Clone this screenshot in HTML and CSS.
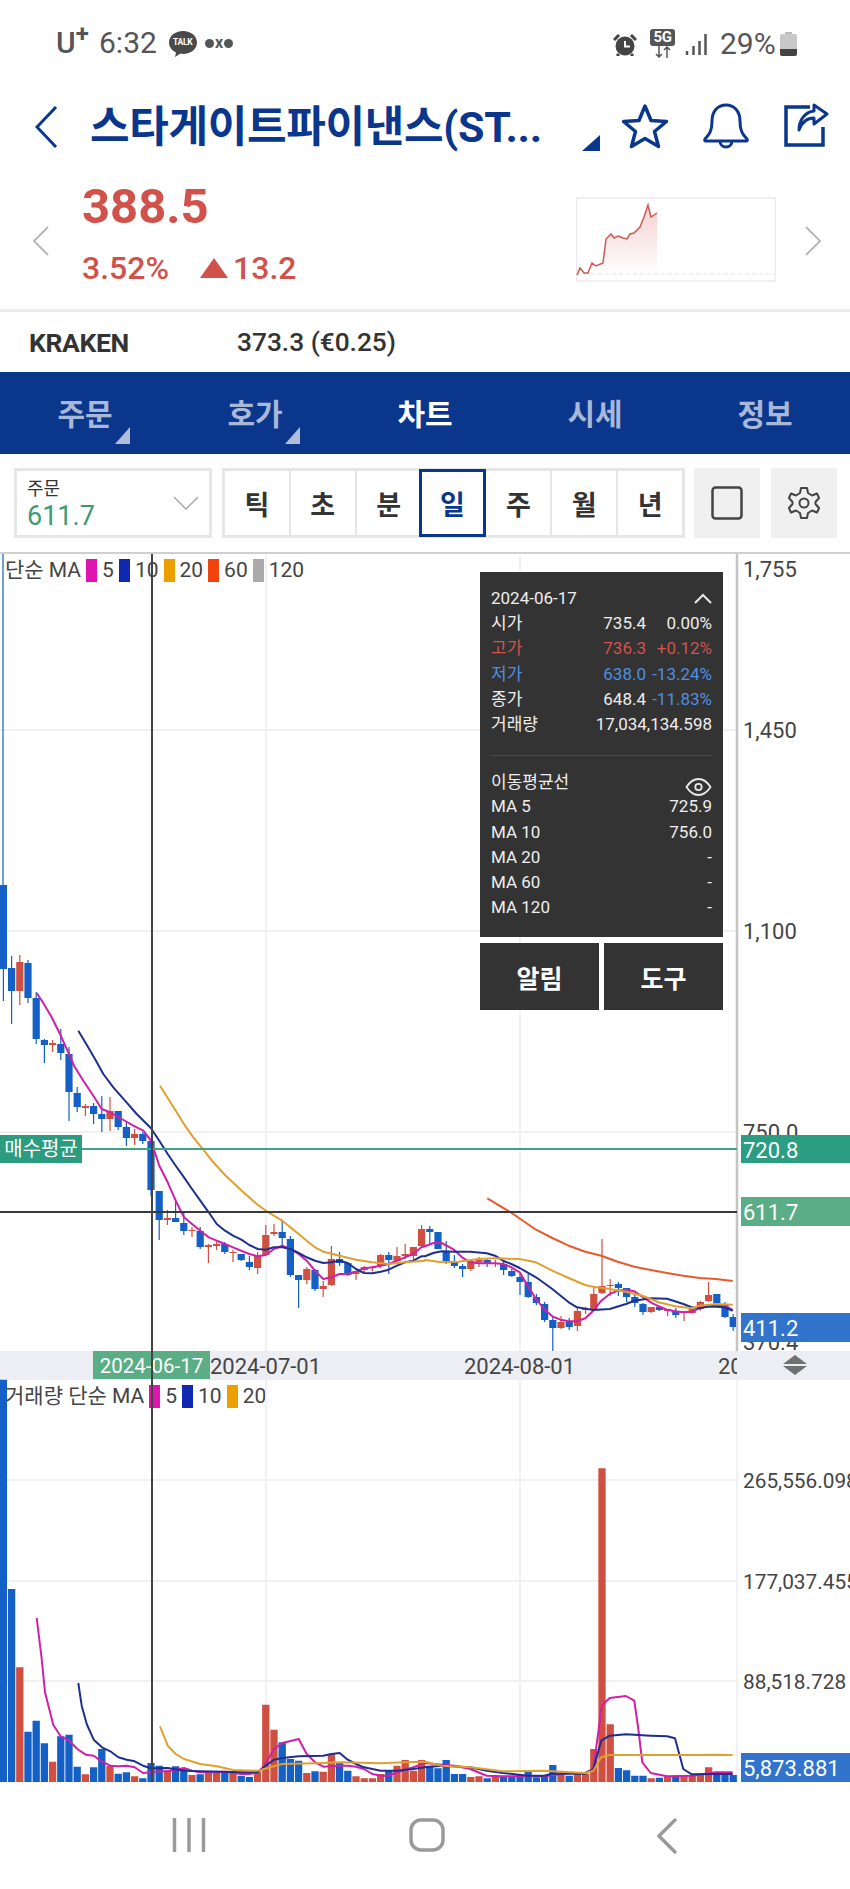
FILE: index.html
```html
<!DOCTYPE html>
<html lang="ko">
<head>
<meta charset="utf-8">
<title>스타게이트파이낸스 차트</title>
<link rel="stylesheet" href="styles.css">
</head>
<body>
<div class="screen">
  <div class="status">
    <div class="status-left">
      <span class="carrier">U<sup>+</sup></span>
      <span class="clock">6:32</span>
      <span class="talk"><svg width="30" height="28" viewBox="0 0 30 28"><path d="M15 1C7 1 1 6 1 12.500C1 17 4 20.500 8 22.500L7 27L12.500 23.500C13.500 23.800 14 24 15 24C23 24 29 19 29 12.500C29 6 23 1 15 1Z" fill="#4a4a4a"/></svg><b class="talk-label">TALK</b></span>
      <span class="oxo"><i class="dot"></i><em>x</em><i class="dot"></i></span>
    </div>
    <div class="status-right">
      <svg class="alarm" width="24" height="22" viewBox="0 0 24 22"><circle cx="12" cy="12" r="9.500" fill="#444"/><path d="M12 7V12.500H17" stroke="#fff" stroke-width="2" fill="none"/><path d="M1 6L6 1M23 6L18 1M6 20L4 22M18 20L20 22" stroke="#444" stroke-width="3"/></svg>
      <span class="net"><b class="net-5g">5G</b><svg width="20" height="12" viewBox="0 0 20 12"><path d="M6 0V11M3 8L6 11L9 8M14 12V1M11 4L14 1L17 4" stroke="#555" stroke-width="1.500" fill="none"/></svg></span>
      <svg class="signal" width="22" height="21" viewBox="0 0 22 21"><path d="M2 17V21M8.500 12V21M14.500 7V21M20.500 0V21" stroke="#555" stroke-width="2.500" fill="none"/></svg>
      <span class="batt-pct">29%</span>
      <span class="battery"><i class="battery-cap"></i><span class="battery-body"><i class="battery-level"></i></span></span>
    </div>
  </div>

  <div class="titlebar">
    <svg class="back" width="23" height="42" viewBox="0 0 23 42"><path d="M21 1L2 21L21 41" fill="none" stroke="#0a378c" stroke-width="3"/></svg>
    <h1 class="title">스타게이트파이낸스(ST...</h1>
    <i class="corner corner-navy"></i>
    <svg class="star" width="48" height="46" viewBox="0 0 48 46"><path d="M24 3L30 17.500L45.500 18.500L33.500 28.500L37.500 43.500L24 35.500L10.500 43.500L14.500 28.500L2.500 18.500L18 17.500Z" fill="none" stroke="#0a378c" stroke-width="3.500" stroke-linejoin="round"/></svg>
    <svg class="bell" width="48" height="46" viewBox="0 0 48 46"><path d="M3 36C8 31 10 27 10 18C10 8 16 2 24 2C32 2 38 8 38 18C38 27 40 31 45 36C46 38 45 38 44 38H4C3 38 2 38 3 36ZM18 38C18 42 21 44 24 44C27 44 30 42 30 38" fill="none" stroke="#0a378c" stroke-width="3"/></svg>
    <svg class="share" width="45" height="44" viewBox="0 0 45 44"><path d="M26 4H2V42H39V24" fill="none" stroke="#0a378c" stroke-width="3.500"/><path d="M30 2L43 11L30 21V15C23 15 18 19 15 27C15 17 21 9 30 8Z" fill="none" stroke="#0a378c" stroke-width="3" stroke-linejoin="round"/></svg>
  </div>

  <div class="quote">
    <svg class="quote-prev" width="18" height="30" viewBox="0 0 18 30"><path d="M16 1L2 15L16 29" fill="none" stroke="#b8b8b8" stroke-width="2"/></svg>
    <div class="quote-info">
      <div class="last">388.5</div>
      <div class="change"><span class="rate">3.52%</span><span class="updown"><i class="up-tri"></i>13.2</span></div>
    </div>
    <svg class="spark" width="200" height="85" viewBox="576 197 200 85">
      <defs><linearGradient id="sparkfill" x1="0" y1="0" x2="0" y2="1"><stop offset="0" stop-color="#d0524a" stop-opacity=".26"/><stop offset="1" stop-color="#d0524a" stop-opacity="0"/></linearGradient></defs>
      <rect x="576.500" y="198" width="199" height="83" fill="#fff" stroke="#ececec" stroke-width="1.500"/>
      <path d="M577 274H775" stroke="#e4e4e4" stroke-dasharray="4 3" fill="none"/>
      <path d="M577 275L580 268L584 273L588 273L592 263L596 266L603 263L606 239L611 234L614 238L618 236L623 238L627 239L630 234L634 233L640 227L644 217L648 205L651 217L657 213V275Z" fill="url(#sparkfill)"/>
      <path d="M577 275L580 268L584 273L588 273L592 263L596 266L603 263L606 239L611 234L614 238L618 236L623 238L627 239L630 234L634 233L640 227L644 217L648 205L651 217L657 213" fill="none" stroke="#cf5a52" stroke-width="1.500"/>
    </svg>
    <svg class="quote-next" width="18" height="30" viewBox="0 0 18 30"><path d="M2 1L16 15L2 29" fill="none" stroke="#b8b8b8" stroke-width="2"/></svg>
  </div>

  <div class="exchange"><b class="ex-name">KRAKEN</b><span class="ex-price">373.3 (€0.25)</span></div>

  <nav class="tabs">
    <div class="tab">주문<i class="corner corner-pale"></i></div>
    <div class="tab">호가<i class="corner corner-pale"></i></div>
    <div class="tab tab-on">차트</div>
    <div class="tab">시세</div>
    <div class="tab">정보</div>
  </nav>

  <div class="toolbar">
    <div class="order">
      <div class="order-text"><span class="order-label">주문</span><span class="order-val">611.7</span></div>
      <svg width="26" height="14" viewBox="0 0 26 14"><path d="M1 1L13 13L25 1" fill="none" stroke="#aaa" stroke-width="1.500"/></svg>
    </div>
    <div class="periods">
      <span class="period">틱</span><span class="period">초</span><span class="period">분</span><span class="period period-on">일</span><span class="period">주</span><span class="period">월</span><span class="period">년</span>
    </div>
    <div class="tool"><svg width="32" height="34" viewBox="0 0 32 34"><rect x="1.500" y="1.500" width="29" height="31" rx="3" fill="none" stroke="#444" stroke-width="2.500"/></svg></div>
    <div class="tool tool-gear"><svg width="32" height="34" viewBox="0 0 32 34"><path d="M13 2H19L20 7L24 9.500L29 7.500L31 12L27.500 16L27.500 18L31 22L29 26.500L24 24.500L20 27L19 32H13L12 27L8 24.500L3 26.500L1 22L4.500 18L4.500 16L1 12L3 7.500L8 9.500L12 7Z" fill="none" stroke="#444" stroke-width="2" stroke-linejoin="round"/><circle cx="16" cy="17" r="4.500" fill="none" stroke="#444" stroke-width="2"/></svg></div>
  </div>

  <div class="chart">
    <div class="pane-price">
      <div class="legend">단순 MA<i class="sw sw-m"></i>5<i class="sw sw-n"></i>10<i class="sw sw-o"></i>20<i class="sw sw-r"></i>60<i class="sw sw-g"></i>120</div>
    </div>
    <div class="timebar">
      <span class="date date-cur">2024-06-17</span>
      <span class="date date-a">2024-07-01</span>
      <span class="date date-b">2024-08-01</span>
      <span class="date date-c">20</span>
      <svg class="updown-ico" width="26" height="20" viewBox="0 0 26 20"><path d="M13 0L25 9H1ZM1 11H25L13 20Z" fill="#707070"/></svg>
    </div>
    <div class="pane-vol">
      <div class="legend legend-vol">거래량 단순 MA<i class="sw sw-m"></i>5<i class="sw sw-n"></i>10<i class="sw sw-o"></i>20</div>
    </div>

    <svg class="plot" width="850" height="1230" viewBox="0 553 850 1230">
      <defs><clipPath id="plotclip"><rect x="0" y="555" width="736" height="797"/></clipPath></defs>
      <path d="M0 731H736M0 932H736M0 1133H736M266 556V1352M520 556V1352M0 1481H737M0 1582H737M0 1682H737M266 1381V1783M520 1381V1783M737 1381V1783" stroke="#f0f0f5" stroke-width="2" fill="none"/>
      <path d="M737 555V1352" stroke="#c4c4c4" stroke-width="2.500" fill="none"/>
      <text class="axis" x="743" y="578">1,755</text>
      <text class="axis" x="743" y="739">1,450</text>
      <text class="axis" x="743" y="940">1,100</text>
      <text class="axis" x="743" y="1141">750.0</text>
      <text class="axis" x="743" y="1351">370.4</text>
      <text class="axis axis-vol" x="743" y="1489">265,556.098</text>
      <text class="axis axis-vol" x="743" y="1590">177,037.455</text>
      <text class="axis axis-vol" x="743" y="1690">88,518.728</text>
      <g clip-path="url(#plotclip)">
        <path d="M3 555V886" stroke="#3d80d2" stroke-width="1.500" fill="none"/>
        <path id="wick-b" class="wick wick-blue"/>
        <path id="wick-r" class="wick wick-red"/>
        <path id="body-b" class="body wick-blue"/>
        <path id="body-r" class="body wick-red"/>
        <polyline id="ma5" class="ma ma-m"/>
        <polyline id="ma10" class="ma ma-n"/>
        <polyline id="ma20" class="ma ma-o"/>
        <polyline id="ma60" class="ma ma-r"/>
      </g>
      <path id="vol-b" class="vol wick-blue"/>
      <path id="vol-r" class="vol wick-red"/>
      <polyline id="vma5" class="ma ma-m"/>
      <polyline id="vma10" class="ma ma-n"/>
      <polyline id="vma20" class="ma ma-o"/>
      <path d="M0 1150H737" stroke="#3fa387" stroke-width="2" fill="none"/>
      <path d="M0 1213H737" stroke="#3a3a3a" stroke-width="2" fill="none"/>
      <path d="M152 555V1783" stroke="#444" stroke-width="2" fill="none"/>
    </svg>

    <span class="tag tag-avg">매수평균</span>
    <span class="tag tag-r tag-teal tag-720">720.8</span>
    <span class="tag tag-r tag-green tag-611">611.7</span>
    <span class="tag tag-r tag-blue tag-411">411.2</span>
    <span class="tag tag-r tag-blue tag-vol">5,873.881</span>

    <div class="info">
      <div class="info-panel">
        <div class="row row-head"><span>2024-06-17</span><svg width="18" height="11" viewBox="0 0 18 11"><path d="M1 10L9 2L17 10" fill="none" stroke="#e8e8e8" stroke-width="2"/></svg></div>
        <div class="row"><span>시가</span><span>735.4</span><span>0.00%</span></div>
        <div class="row c-red"><span>고가</span><span>736.3</span><span>+0.12%</span></div>
        <div class="row c-blue"><span>저가</span><span>638.0</span><span>-13.24%</span></div>
        <div class="row"><span>종가</span><span>648.4</span><span class="c-blue">-11.83%</span></div>
        <div class="row row-wide"><span>거래량</span><span>17,034,134.598</span></div>
        <div class="info-rule"></div>
        <div class="row row-head"><span>이동평균선</span><svg class="eye" width="27" height="18" viewBox="0 0 27 18"><path d="M1.500 9C5 3.500 9 1 13.500 1C18 1 22 3.500 25.500 9C22 14.500 18 17 13.500 17C9 17 5 14.500 1.500 9Z" fill="none" stroke="#e8e8e8" stroke-width="1.800"/><circle cx="13.500" cy="9" r="3.200" fill="none" stroke="#e8e8e8" stroke-width="1.800"/></svg></div>
        <div class="row row-wide"><span>MA 5</span><span>725.9</span></div>
        <div class="row row-wide"><span>MA 10</span><span>756.0</span></div>
        <div class="row row-wide"><span>MA 20</span><span>-</span></div>
        <div class="row row-wide"><span>MA 60</span><span>-</span></div>
        <div class="row row-wide"><span>MA 120</span><span>-</span></div>
      </div>
      <div class="info-btns"><span class="info-btn">알림</span><span class="info-btn">도구</span></div>
    </div>
  </div>

  <div class="navbar">
    <svg width="34" height="34" viewBox="0 0 34 34"><path d="M2.500 1V33M17 1V33M31.500 1V33" stroke="#9a9a9a" stroke-width="3.500" stroke-linecap="round" fill="none"/></svg>
    <svg width="36" height="34" viewBox="0 0 36 34"><rect x="2" y="2" width="32" height="30" rx="10" fill="none" stroke="#9a9a9a" stroke-width="3.500"/></svg>
    <svg width="20" height="36" viewBox="0 0 20 36"><path d="M18 2L2 18L18 34" stroke="#9a9a9a" stroke-width="3.500" fill="none" stroke-linecap="round"/></svg>
  </div>
</div>
<script src="chart.js"></script>
</body>
</html>
```

FILE: styles.css
```css
* { box-sizing: border-box; }
html, body { margin: 0; padding: 0; background: #fff; }
body { font-family: Roboto, "Noto Sans CJK KR", sans-serif; color: #333; }
i, em { font-style: normal; }
.screen { width: 850px; height: 1889px; overflow: hidden; display: flex; flex-direction: column; }

.status { height: 85px; flex: none; display: flex; justify-content: space-between; align-items: flex-start; padding: 28px 53px 0 56px; color: #555; }
.status-left, .status-right { display: flex; align-items: center; height: 30px; }
.carrier { font-size: 30px; font-weight: 500; width: 43px; line-height: 30px; }
.carrier sup { font-size: 24px; font-weight: 700; line-height: 0; position: relative; top: 0; vertical-align: super; }
.clock { font-size: 30px; width: 69px; line-height: 30px; }
.talk { position: relative; width: 30px; height: 28px; margin-top: 2px; }
.talk svg { display: block; }
.talk-label { position: absolute; left: 5px; top: 7px; font-size: 8.500px; line-height: 10px; color: #fff; font-weight: 700; letter-spacing: -.3px; }
.oxo { display: flex; align-items: center; margin-left: 7px; color: #555; }
.oxo em { font-size: 16px; font-weight: 700; line-height: 14px; margin: 0 1px; }
.dot { width: 9px; height: 9px; border-radius: 50%; background: #555; }
.alarm { margin-right: 13px; margin-left: -1px; margin-top: 3px; }
.net { display: flex; flex-direction: column; align-items: center; width: 25px; margin-right: 10px; margin-top: 1px; }
.net-5g { background: #555; color: #fff; font-size: 15px; line-height: 17px; border-radius: 3px; width: 25px; text-align: center; font-weight: 700; letter-spacing: -.5px; }
.net svg { margin-top: 0; }
.signal { margin-right: 13px; margin-top: 3px; }
.batt-pct { font-size: 30px; width: 60px; color: #555; line-height: 30px; margin-top: 1px; }
.battery { display: flex; flex-direction: column; align-items: center; width: 17px; height: 24px; margin-top: 2px; }
.battery-cap { width: 7px; height: 2px; background: #bbb; flex: none; }
.battery-body { flex: 1; width: 17px; background: #c8c8c8; border-radius: 2px; display: flex; align-items: flex-end; overflow: hidden; }
.battery-level { height: 7px; width: 100%; background: #444; }

.titlebar { height: 80px; flex: none; display: flex; align-items: flex-start; padding: 18px 0 0 35px; }
.back { margin-top: 3px; flex: none; }
.title { margin: 0 0 0 32px; width: 492px; flex: none; font-size: 43px; line-height: 48px; font-weight: 700; color: #0a378c; white-space: nowrap; letter-spacing: -.3px; }
.corner { display: block; width: 0; height: 0; border-style: solid; border-width: 0 0 16px 18px; border-color: transparent; }
.corner-navy { border-bottom-color: #0a378c; margin-top: 32px; flex: none; }
.star { margin-left: 21px; flex: none; }
.bell { margin-left: 33px; flex: none; }
.share { margin-left: 34px; flex: none; }

.quote { height: 147px; flex: none; border-bottom: 3px solid #ececec; display: flex; align-items: flex-start; padding-left: 32px; }
.quote-prev { margin-top: 61px; margin-right: 32px; flex: none; }
.quote-info { width: 494px; flex: none; }
.last { font-size: 49px; line-height: 60px; margin-top: 12px; font-weight: 700; color: #d0524a; }
.change { display: flex; margin-top: 11px; font-size: 32px; line-height: 40px; font-weight: 500; color: #d0524a; }
.rate { width: 118px; }
.updown { display: flex; align-items: center; }
.up-tri { width: 0; height: 0; border-style: solid; border-width: 0 14px 20px 14px; border-color: transparent transparent #d0524a; margin-right: 5px; }
.spark { flex: none; margin-top: 32px; display: block; }
.quote-next { flex: none; margin: 61px 0 0 28px; }

.exchange { height: 60px; flex: none; display: flex; align-items: center; padding-left: 29px; color: #333; }
.ex-name { width: 208px; font-size: 26.500px; font-weight: 700; letter-spacing: -.4px; }
.ex-price { font-size: 26.300px; font-weight: 500; }

.tabs { height: 82px; flex: none; background: #0a378c; display: flex; }
.tab { flex: 1; position: relative; text-align: center; font-size: 30px; line-height: 86px; font-weight: 700; color: #a8b8d8; height: 82px; }
.tab-on { color: #fff; }
.tab .corner { position: absolute; left: 115px; top: 55px; border-width: 0 0 17px 15px; }
.corner-pale { border-bottom-color: #b0bedb; }

.toolbar { height: 98px; flex: none; display: flex; align-items: flex-start; padding: 14px 0 0 14px; }
.order { width: 198px; height: 70px; border: 3px solid #e6e6e6; display: flex; align-items: center; justify-content: space-between; padding: 0 10px 0 10px; }
.order-text { display: flex; flex-direction: column; margin-top: 4px; }
.order-label { font-size: 18px; line-height: 22px; color: #333; }
.order-val { font-size: 27px; line-height: 32px; color: #3c9b74; }
.periods { width: 463px; height: 70px; margin-left: 10px; border: 3px solid #e6e6e6; display: flex; }
.period { flex: 1; display: flex; align-items: center; justify-content: center; font-size: 27px; font-weight: 700; color: #333; border-left: 2px solid #e6e6e6; }
.period:first-child { border-left: 0; }
.period-on { color: #0a378c; outline: 3px solid #0a378c; outline-offset: -1px; border-left: 0; position: relative; }
.tool { width: 66px; height: 70px; margin-left: 9px; background: #f0f0f0; display: flex; align-items: center; justify-content: center; }
.tool-gear { margin-left: 11px; }

.chart { position: relative; height: 1230px; flex: none; width: 850px; overflow: hidden; }
.pane-price { height: 799px; border-top: 2px solid #cfcfcf; padding: 3px 0 0 5px; }
.timebar { height: 29px; background: #eceef3; position: relative; }
.pane-vol { height: 402px; padding: 3px 0 0 5px; }
.legend { display: flex; align-items: center; font-size: 21px; line-height: 26px; color: #444; white-space: nowrap; }
.sw { width: 11px; height: 23px; margin: 0 5px; flex: none; }
.sw-m { background: #e014b0; }
.sw-n { background: #0f2ab0; }
.sw-o { background: #ee9f00; }
.sw-r { background: #f4440e; }
.sw-g { background: #aaa; }
.date { position: absolute; top: 0; height: 28px; line-height: 31px; font-size: 22px; color: #444; white-space: nowrap; }
.date-cur { left: 93px; width: 117px; background: #5aad85; color: #fff; text-align: center; font-size: 20.500px; }
.date-a { left: 210px; }
.date-b { left: 464px; }
.date-c { left: 718px; width: 19px; overflow: hidden; }
.updown-ico { position: absolute; left: 782px; top: 4px; }

.plot { position: absolute; left: 0; top: 0; display: block; }
.axis { font-size: 22px; fill: #444; font-family: Roboto, sans-serif; }
.axis-vol { font-size: 20.800px; }
.wick { fill: none; stroke-width: 1.200; }
.body { fill: none; stroke-width: 7.200; }
.vol { fill: none; stroke-width: 7.300; }
.wick-blue { stroke: #1560c6; }
.wick-red { stroke: #cf5040; }
.ma { fill: none; stroke-width: 2; stroke-linejoin: round; }
.ma-m { stroke: #d020a8; }
.ma-n { stroke: #1f2f8f; }
.ma-o { stroke: #e0a030; }
.ma-r { stroke: #e85a2a; }

.tag { position: absolute; color: #fff; height: 28px; line-height: 31px; font-size: 22px; white-space: nowrap; }
.tag-avg { left: 0; top: 583px; width: 82px; background: #2b9c80; font-size: 20px; text-align: center; line-height: 28px; }
.tag-r { left: 741px; width: 109px; padding-left: 2px; }
.tag-teal { background: #2a9d82; }
.tag-green { background: #5aad85; }
.tag-blue { background: #3274cc; }
.tag-720 { top: 583px; }
.tag-611 { top: 645px; height: 29px; }
.tag-411 { top: 761px; height: 29px; }
.tag-vol { top: 1201px; height: 29px; }

.info { position: absolute; left: 480px; top: 20px; width: 243px; }
.info-panel { background: #333; height: 365px; padding: 14px 11px 0; color: #eee; font-size: 17px; }
.row { display: grid; grid-template-columns: 1fr 72px 66px; height: 25.200px; line-height: 25.200px; text-align: right; white-space: nowrap; }
.row > span:first-child { text-align: left; }
.row-wide { grid-template-columns: 1fr auto; }
.row-head { grid-template-columns: 1fr auto; align-items: center; }
.row-head svg { display: block; }
.row .eye { margin-top: 9px; }
.c-red { color: #cc5550; }
.c-blue { color: #4f8fe0; }
.info-rule { height: 1px; background: #4c4c4c; margin: 18px 0 13px; }
.info-btns { display: flex; justify-content: space-between; margin-top: 6px; }
.info-btn { width: 119px; height: 67px; background: #333; color: #fff; font-size: 25px; font-weight: 700; display: flex; align-items: center; justify-content: center; }

.navbar { flex: 1; display: flex; align-items: flex-start; padding: 36px 0 0 172px; }
.navbar svg:nth-child(2) { margin-left: 203px; }
.navbar svg:nth-child(3) { margin-left: 212px; }
```

FILE: chart.js
```js
// [colour, wickTop, wickBottom, bodyTop, bodyBottom, volumeTop(zoomed px)]
var D = [
["b",886,1002,886,970,32],["b",957,1025,969,992,660],["r",956,1006,963,992,895],["b",961,1004,964,999,1088],["b",993,1045,999,1040,1055],
["b",1040,1064,1041,1046,1123],["r",1041,1053,1044,1046,1178],["b",1030,1061,1045,1054,1102],["b",1048,1122,1055,1093,1097],["b",1088,1113,1094,1108,1193],
["r",1105,1117,1107,1109,1216],["b",1104,1125,1107,1115,1195],["b",1097,1133,1115,1120,1140],["r",1098,1132,1112,1120,1190],["b",1112,1131,1112,1128,1214],
["b",1123,1147,1128,1139,1210],["r",1130,1146,1135,1139,1222],["b",1133,1145,1135,1142,1228],["b",1142,1197,1142,1191,1182],["b",1192,1241,1192,1221,1190],
["r",1211,1226,1219,1221,1205],["b",1200,1223,1219,1223,1192],["b",1213,1236,1224,1232,1200],["r",1228,1238,1231,1232,1218],["b",1228,1250,1232,1248,1216],
["r",1245,1264,1246,1248,1208],["r",1243,1251,1245,1247,1208],["b",1243,1255,1245,1253,1212],["r",1251,1263,1253,1254,1206],["b",1255,1262,1255,1261,1220],
["b",1257,1271,1263,1268,1224],["r",1253,1275,1257,1269,1210],["r",1226,1257,1236,1256,1007],["r",1225,1237,1233,1235,1082],["b",1221,1247,1233,1239,1120],
["b",1237,1278,1240,1276,1170],["b",1276,1309,1276,1281,1175],["r",1268,1285,1270,1281,1212],["b",1270,1292,1271,1290,1207],["r",1282,1298,1287,1290,1208],
["r",1247,1287,1260,1286,1155],["b",1253,1267,1260,1264,1182],["b",1264,1277,1264,1276,1205],["r",1272,1281,1272,1275,1222],["r",1267,1273,1268,1271,1228],
["r",1267,1272,1268,1269,1228],["r",1255,1269,1256,1267,1215],["b",1253,1275,1256,1261,1205],["r",1248,1263,1257,1262,1190],["r",1245,1260,1255,1257,1173],
["r",1248,1262,1248,1257,1205],["r",1226,1248,1230,1247,1173],["b",1227,1245,1230,1233,1190],["b",1233,1250,1233,1250,1198],["b",1242,1265,1252,1262,1173],
["b",1256,1269,1262,1267,1215],["b",1265,1278,1267,1270,1215],["r",1261,1272,1262,1270,1224],["r",1258,1268,1261,1263,1222],["b",1259,1268,1261,1265,1228],
["r",1261,1268,1264,1265,1220],["b",1262,1276,1265,1271,1224],["b",1270,1278,1272,1277,1224],["b",1275,1296,1278,1283,1218],["b",1275,1299,1283,1298,1208],
["b",1295,1306,1298,1304,1225],["b",1303,1323,1305,1321,1220],["b",1318,1352,1321,1329,1188],["r",1317,1330,1323,1329,1210],["b",1319,1331,1323,1328,1220],
["r",1308,1332,1312,1327,1215],["r",1308,1315,1310,1311,1215],["r",1288,1312,1295,1311,1140],["r",1240,1295,1287,1294,298],["r",1280,1297,1286,1287,1066],
["b",1283,1297,1285,1289,1197],["b",1289,1303,1289,1298,1204],["b",1295,1308,1298,1304,1220],["b",1304,1316,1305,1313,1220],["r",1308,1314,1308,1313,1228],
["b",1307,1312,1308,1311,1226],["r",1310,1317,1310,1312,1222],["b",1309,1319,1312,1316,1224],["r",1312,1322,1313,1314,1220],["r",1308,1315,1310,1314,1218],
["r",1302,1312,1303,1310,1215],["r",1283,1303,1296,1302,1195],["b",1295,1307,1295,1304,1212],["b",1303,1319,1306,1318,1212],["b",1315,1332,1318,1328,1218]
];
var d = { wb: "", wr: "", bb: "", br: "", vb: "", vr: "" };
D.forEach(function (c, i) {
  var x = (3.4 + 8.2 * i).toFixed(1), k = c[0];
  d["w" + k] += "M" + x + " " + c[1] + "V" + c[2];
  d["b" + k] += "M" + x + " " + c[3] + "V" + c[4];
  d["v" + k] += "M" + x + " " + (1370 + c[5] / 3).toFixed(1) + "V1783";
});
function set(id, v) { document.getElementById(id).setAttribute("d", v); }
set("wick-b", d.wb); set("wick-r", d.wr); set("body-b", d.bb); set("body-r", d.br);
set("vol-b", d.vb); set("vol-r", d.vr);

// Lines are listed as crop coordinates (3x) in two runs: left half and right half.
function line(id, a, ay, b, by) {
  var p = [], i;
  for (i = 0; i < a.length; i += 2) p.push((a[i] / 3).toFixed(1) + "," + (ay + a[i + 1] / 3).toFixed(1));
  for (i = 0; i < b.length; i += 2) p.push((425 + b[i] / 3).toFixed(1) + "," + (by + b[i + 1] / 3).toFixed(1));
  document.getElementById(id).setAttribute("points", p.join(" "));
}
line("ma5", [110,342,130,372,155,415,180,465,205,520,222,560,250,605,280,650,305,690,330,700,365,720,400,740,430,755,453,785,478,860,503,910,527,965,552,1015,576,1035,601,1055,626,1075,650,1085,675,1095,699,1105,724,1115,748,1125,773,1132,797,1128,822,1110,847,1100,871,1110,896,1125,920,1145,945,1175,970,1200,994,1195,1019,1185,1043,1185,1068,1178,1092,1168,1117,1165,1142,1160,1166,1155,1191,1145,1215,1135,1240,1125,1264,1105], 880,
 [0,352,25,342,50,342,87,362,111,385,136,400,161,403,185,403,210,403,234,405,259,415,284,430,308,470,333,510,357,540,382,562,406,572,431,577,456,577,481,568,505,545,529,515,554,495,578,485,603,482,628,487,652,503,677,520,701,532,726,542,750,547,775,550,800,548,824,538,849,530,873,530,898,530,923,543], 1130);
line("ma10", [235,455,260,497,285,540,310,585,340,625,375,665,410,705,453,748,478,785,503,825,527,860,552,895,576,930,601,965,626,1000,650,1035,675,1055,699,1070,724,1082,748,1098,773,1110,797,1112,822,1105,847,1105,871,1110,896,1122,920,1135,945,1145,970,1152,994,1150,1019,1145,1043,1152,1068,1170,1092,1182,1117,1183,1142,1178,1166,1172,1191,1160,1215,1150,1240,1145,1264,1132], 880,
 [0,382,25,372,50,367,87,368,136,368,185,373,210,380,234,395,259,405,284,417,333,445,382,480,431,520,456,535,505,543,554,540,603,525,628,515,677,508,726,509,750,517,775,525,800,535,824,537,849,533,873,533,898,535,923,545], 1130);
line("ma20", [480,620,505,660,530,700,555,740,580,775,610,812,640,850,675,888,725,935,770,975,800,997,847,1025,871,1045,896,1065,920,1085,945,1105,970,1118,1019,1130,1068,1142,1117,1150,1166,1155,1215,1150,1275,1145], 880,
 [0,393,50,400,100,398,160,390,210,388,284,390,333,400,382,425,431,447,480,468,505,473,554,480,603,488,652,500,701,520,750,532,800,538,824,530,873,525,923,527], 1130);
line("ma60", [], 880, [187,208,260,252,333,302,382,327,431,350,481,368,529,380,578,398,628,413,677,423,726,432,775,440,824,447,873,450,923,456], 1130);
line("vma5", [110,747,125,870,135,970,160,1068,183,1103,208,1115,232,1140,257,1157,281,1160,306,1178,331,1190,355,1192,380,1190,404,1195,429,1212,453,1210,478,1207,503,1207,527,1202,552,1197,576,1205,601,1210,626,1210,650,1210,675,1208,700,1212,724,1215,748,1215,773,1210,790,1195,822,1140,847,1122,896,1110,920,1155,945,1180,970,1193,994,1192,1019,1190,1043,1190,1068,1193,1092,1200,1117,1215,1142,1220,1166,1220,1191,1210,1240,1195], 1370,
 [0,1182,50,1187,87,1190,136,1200,185,1220,234,1222,308,1222,357,1222,431,1212,480,1212,505,1200,520,1090,530,1010,554,987,603,981,628,995,640,1080,652,1180,677,1212,726,1222,800,1220,873,1210,923,1210], 1370);
line("vma10", [235,942,245,1010,260,1065,281,1112,306,1135,331,1147,355,1165,380,1172,404,1177,429,1190,453,1198,503,1197,552,1205,601,1207,675,1208,724,1210,773,1210,797,1190,822,1172,847,1167,896,1162,970,1160,994,1155,1019,1152,1043,1172,1068,1185,1092,1195,1142,1205,1191,1205,1240,1200], 1370,
 [0,1195,50,1190,136,1195,185,1205,234,1212,308,1220,357,1220,382,1214,481,1214,505,1200,529,1115,554,1100,603,1096,677,1100,726,1102,750,1108,775,1200,800,1216,873,1215,923,1215], 1370);
line("vma20", [480,1072,503,1130,527,1155,552,1170,601,1185,650,1192,699,1203,773,1205,822,1192,847,1185,945,1183,1019,1180,1142,1183,1215,1180], 1370,
 [0,1178,50,1190,136,1195,234,1207,357,1205,481,1212,505,1205,529,1165,554,1158,628,1158,773,1158,873,1157,923,1158], 1370);
```
